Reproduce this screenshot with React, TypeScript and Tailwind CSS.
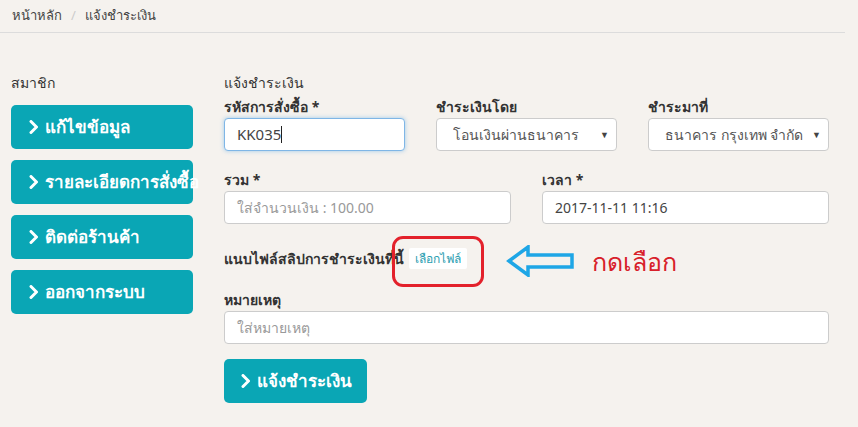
import React from 'react';

const menu = ['แก้ไขข้อมูล', 'รายละเอียดการสั่งซื้อ', 'ติดต่อร้านค้า', 'ออกจากระบบ'];

function Chevron({ className = '' }: { className?: string }) {
  return (
    <svg viewBox="0 0 10 14" className={className} aria-hidden="true">
      <path d="M2 1.5 L7.5 7 L2 12.5" fill="none" stroke="currentColor" strokeWidth="3" strokeLinecap="round" strokeLinejoin="round" />
    </svg>
  );
}

function SelectBox({ value }: { value: string }) {
  return (
    <div className="h-[33px] bg-white border border-[#ccc] rounded-[4px] flex items-center pl-[16px] pr-[7px] text-[14px] text-[#555]">
      <span className="flex-1 truncate">{value}</span>
      <span className="text-[9px] text-[#444]">▼</span>
    </div>
  );
}

export default function App() {
  return (
    <div className="w-[858px] h-[427px] bg-[#f5f2ee] font-['Noto_Sans','Liberation_Sans',sans-serif] text-[#333] overflow-hidden">
      <div className="w-[845px] h-[33px] border-b border-[#dcdcdc] flex items-center px-[12px] text-[13px] text-[#444]">
        <span>หน้าหลัก</span>
        <span className="mx-[9px] text-[#ccc]">/</span>
        <span>แจ้งชำระเงิน</span>
      </div>

      <div className="flex pt-[37px]">
        <div className="w-[182px] ml-[11px]">
          <div className="h-[24px] flex items-center text-[14px] text-[#333]">สมาชิก</div>
          <div className="mt-[11px] flex flex-col gap-[11px]">
            {menu.map((m) => (
              <div
                key={m}
                className="h-[44px] rounded-[5px] bg-[#0aa6b5] text-white flex items-center pl-[18px] text-[17px] font-bold whitespace-nowrap overflow-visible"
              >
                <Chevron className="w-[10px] h-[14px] mr-[6px] shrink-0" />
                <span className="relative z-10">{m}</span>
              </div>
            ))}
          </div>
        </div>

        <div className="w-[605px] ml-[31px]">
          <div className="h-[24px] flex items-center text-[14px]">แจ้งชำระเงิน</div>
          <div className="grid grid-cols-3 gap-x-[31px]">
            <div>
              <div className="h-[24px] flex items-center text-[14px] font-bold">รหัสการสั่งซื้อ *</div>
              <div className="h-[33px] bg-white border border-[#7fb6e6] rounded-[4px] shadow-[0_0_4px_rgba(102,175,233,0.6)] flex items-center px-[12px] text-[15px] text-[#444]">
                KK035<span className="w-px h-[17px] bg-[#222]" />
              </div>
            </div>
            <div>
              <div className="h-[24px] flex items-center text-[14px] font-bold">ชำระเงินโดย</div>
              <SelectBox value="โอนเงินผ่านธนาคาร" />
            </div>
            <div>
              <div className="h-[24px] flex items-center text-[14px] font-bold">ชำระมาที่</div>
              <SelectBox value="ธนาคาร กรุงเทพ จำกัด" />
            </div>
          </div>

          <div className="grid grid-cols-2 gap-x-[31px] mt-[16px]">
            <div>
              <div className="h-[24px] flex items-center text-[14px] font-bold">รวม *</div>
              <div className="h-[33px] bg-white border border-[#ccc] rounded-[4px] flex items-center px-[12px] text-[14px] text-[#999]">
                ใส่จำนวนเงิน : 100.00
              </div>
            </div>
            <div>
              <div className="h-[24px] flex items-center text-[14px] font-bold">เวลา *</div>
              <div className="h-[33px] bg-white border border-[#ccc] rounded-[4px] flex items-center px-[12px] text-[14px] text-[#444]">
                2017-11-11 11:16
              </div>
            </div>
          </div>

          <div className="relative flex items-center mt-[24px] h-[21px]">
            <span className="w-[179px] text-[14px] font-bold whitespace-nowrap">แนบไฟล์สลิปการชำระเงินที่นี้</span>
            <span className="ml-[6px] h-[21px] w-[58px] justify-center bg-white rounded-[2px] flex items-center text-[12px] text-[#2a9db0]">
              เลือกไฟล์
            </span>
            {/* annotation: red box around the file button */}
            <div className="absolute left-[168px] top-[-12px] w-[92px] h-[51px] border-[3px] border-[#e3212b] rounded-[11px]" />
            <svg viewBox="0 0 70 32" className="ml-[39px] w-[70px] h-[32px] mt-[5px]" aria-hidden="true">
              <path d="M3 16 L22 2 L22 10 L66 10 L66 22 L22 22 L22 30 Z" fill="none" stroke="#1ea6e6" strokeWidth="3.5" strokeLinejoin="miter" />
            </svg>
            <span className="ml-[16px] text-[25px] text-[#d8202a] leading-none mt-[6px]">กดเลือก</span>
          </div>

          <div className="mt-[18px] h-[24px] flex items-center text-[14px] font-bold">หมายเหตุ</div>
          <div className="h-[33px] bg-white border border-[#ccc] rounded-[4px] flex items-center px-[12px] text-[14px] text-[#999]">
            ใส่หมายเหตุ
          </div>

          <button className="mt-[15px] h-[44px] w-[143px] rounded-[5px] bg-[#0aa6b5] text-white flex items-center pl-[17px] text-[17px] font-bold">
            <Chevron className="w-[10px] h-[14px] mr-[6px] shrink-0" />
            แจ้งชำระเงิน
          </button>
        </div>
      </div>
    </div>
  );
}
